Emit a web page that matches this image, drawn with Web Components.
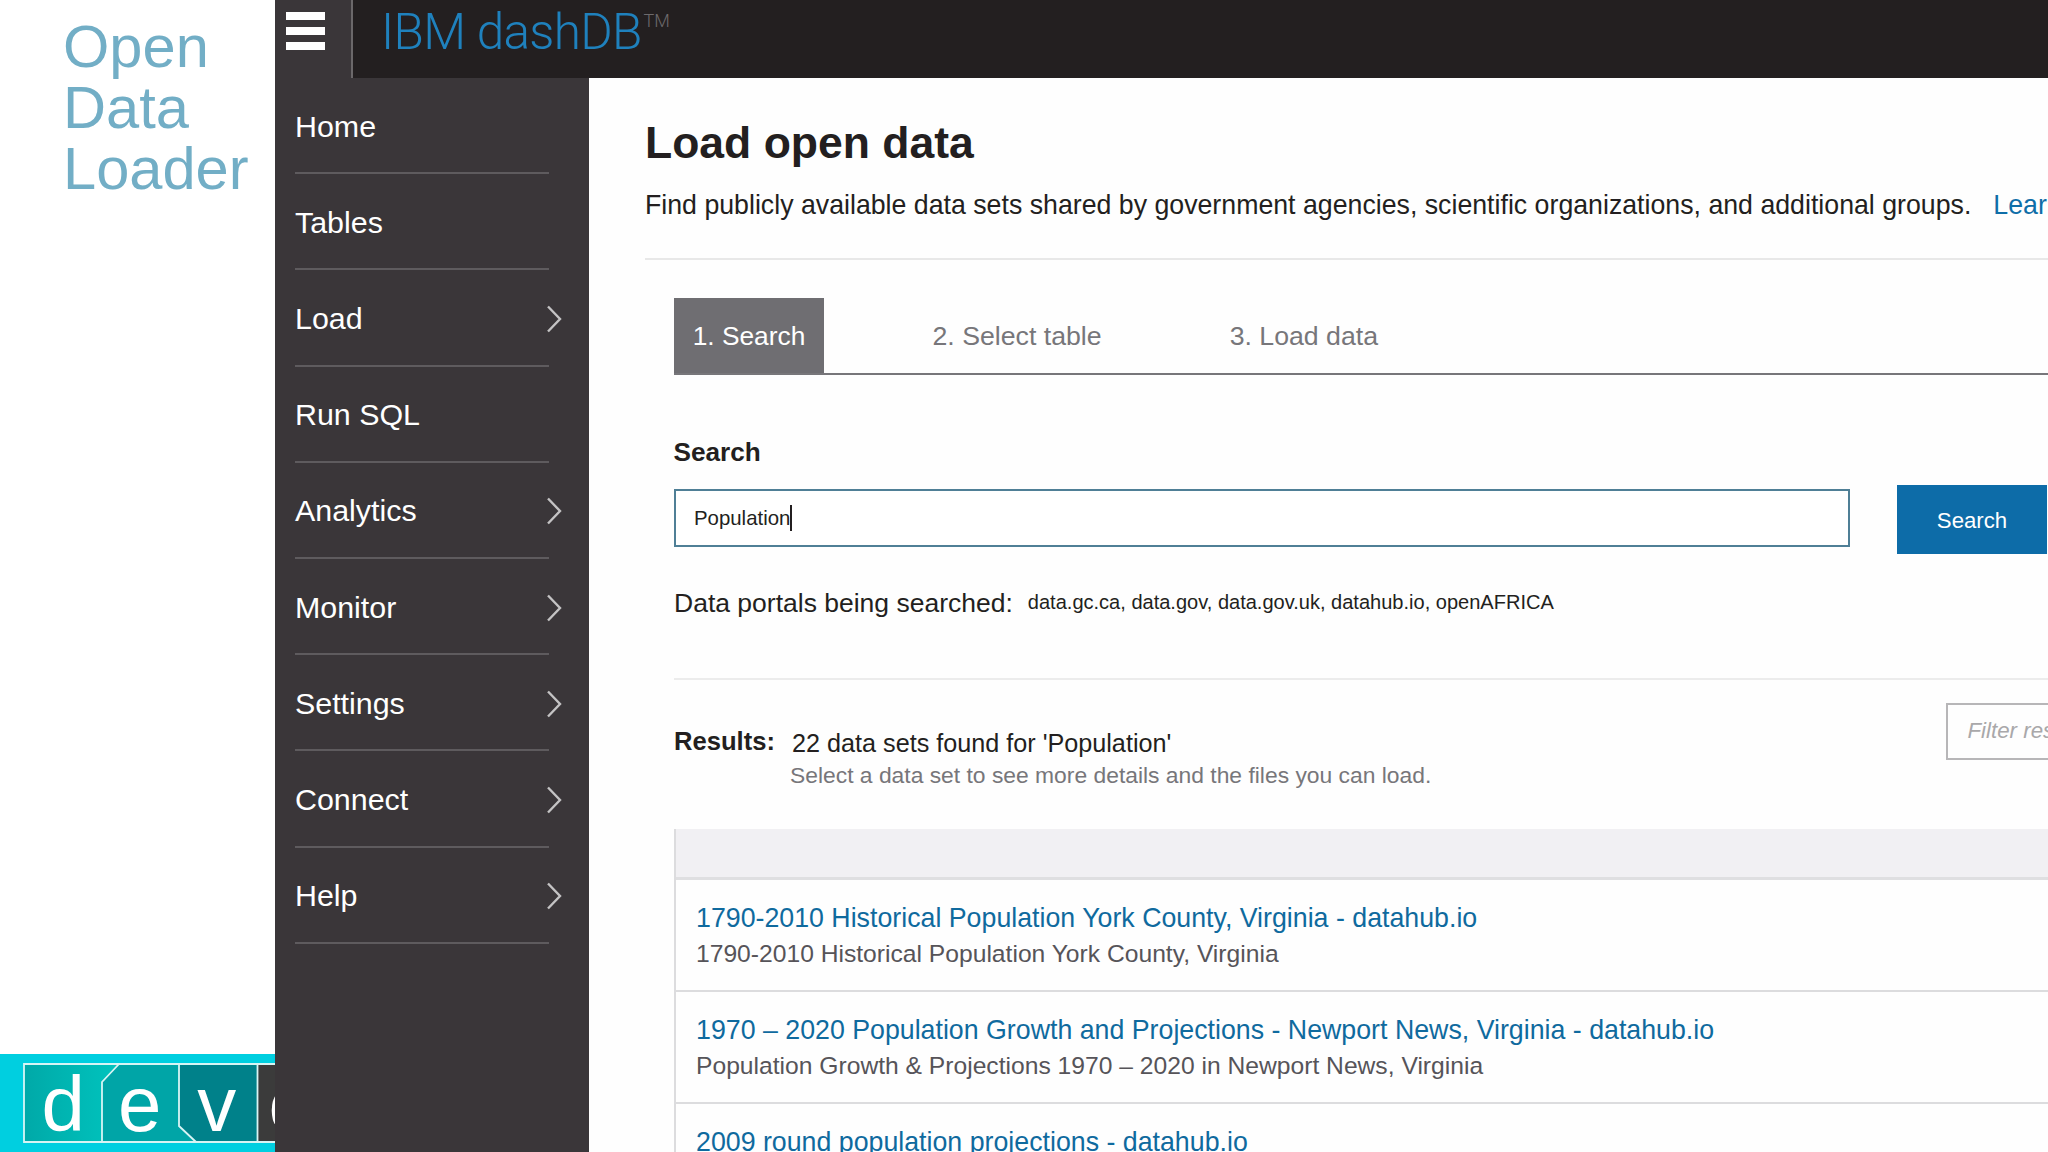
<!DOCTYPE html>
<html lang="en">
<head>
<meta charset="utf-8">
<title>Open Data Loader</title>
<style>
html,body{margin:0;padding:0;width:2048px;height:1152px;overflow:hidden;background:#fff}
body{font-family:"Liberation Sans",Arial,sans-serif}
app-shell{width:2048px;height:1152px}
</style>
</head>
<body>
<app-shell>
  <dev-panel slot="left">
    <span slot="title">Open<br>Data<br>Loader</span>
  </dev-panel>
  <top-bar slot="top"></top-bar>
  <side-nav slot="nav">
    <nav-item>Home</nav-item>
    <nav-item>Tables</nav-item>
    <nav-item arrow>Load</nav-item>
    <nav-item>Run SQL</nav-item>
    <nav-item arrow>Analytics</nav-item>
    <nav-item arrow>Monitor</nav-item>
    <nav-item arrow>Settings</nav-item>
    <nav-item arrow>Connect</nav-item>
    <nav-item arrow>Help</nav-item>
  </side-nav>
  <load-page slot="main">
    <wizard-tabs></wizard-tabs>
    <search-form></search-form>
    <results-head></results-head>
    <results-table>
      <result-row><span slot="title">1790-2010 Historical Population York County, Virginia - datahub.io</span>1790-2010 Historical Population York County, Virginia</result-row>
      <result-row><span slot="title">1970 – 2020 Population Growth and Projections - Newport News, Virginia - datahub.io</span>Population Growth &amp; Projections 1970 – 2020 in Newport News, Virginia</result-row>
      <result-row><span slot="title">2009 round population projections - datahub.io</span></result-row>
    </results-table>
  </load-page>
</app-shell>
<script>
function def(name, html, init){
  customElements.define(name, class extends HTMLElement{
    constructor(){super();const r=this.attachShadow({mode:'open'});r.innerHTML=html;}
    connectedCallback(){ if(init) init(this); }
  });
}
def('app-shell',`<style>
:host{display:grid;grid-template-columns:275px 1fr;grid-template-rows:78px 1fr;overflow:hidden}
.l{grid-row:1/3;display:block;min-height:0}
.t{display:block}
.b{display:flex;min-height:0;overflow:hidden}
</style>
<div class="l"><slot name="left"></slot></div>
<div class="t"><slot name="top"></slot></div>
<div class="b"><slot name="nav"></slot><slot name="main"></slot></div>`);

def('dev-panel',`<style>
:host{display:flex;flex-direction:column;justify-content:space-between;height:1152px;background:#fff}
.title{font:59.600px/61px "Liberation Sans",Arial,sans-serif;color:#72aec6;padding:16px 0 0 63px}
.bar{height:98px;background:#00cfe0;padding:9px 0 0 23px;box-sizing:border-box;overflow:hidden}
.logo{position:relative;width:252px;height:80px;box-sizing:border-box;display:flex;overflow:hidden}
svg{position:absolute;left:0;top:0}
.c{position:relative;width:77.500px;flex:none;text-align:center;color:#fff;font:78px/83px "Liberation Sans",Arial,sans-serif;height:80px}
.c.d{padding-left:3px;box-sizing:border-box}
.c.e{padding-left:1px;box-sizing:border-box}
.c.o{margin-left:-4px}
</style>
<div class="title"><slot name="title"></slot></div>
<div class="bar"><div class="logo">
<svg width="260" height="80" viewBox="0 0 260 80">
<defs><linearGradient id="g" x1="0" x2="1" y1="0" y2="0"><stop offset="0" stop-color="#00a9a8"/><stop offset="1" stop-color="#00c4be"/></linearGradient></defs>
<rect x="1" y="1" width="258" height="78" fill="#3b3b3b"/>
<rect x="1" y="1" width="234" height="78" fill="#00818a"/>
<polygon points="79,19 96,1 156,1 156,63 173,79 79,79" fill="#00a5a7"/>
<polygon points="1,1 96,1 79,19 79,79 1,79" fill="url(#g)"/>
<path d="M234.500 1H1V79H260M79 79V19L96 1M156 1V63L173 79M234.500 1V79M234.500 1H260" fill="none" stroke="#d8f4f4" stroke-width="1.800"/>
</svg>
<div class="c d">d</div><div class="c e">e</div><div class="c">v</div><div class="c o">o</div>
</div></div>`);

def('top-bar',`<style>
:host{display:flex;height:78px;background:#231f20;overflow:hidden}
.m{width:78px;flex:none;box-sizing:border-box;background:#3a3639;border-right:2px solid #6b686a;padding:12px 0 0 11px}
.m i{display:block;width:39px;height:8px;background:#fff;margin-bottom:7px}
.b{padding-left:28px;font:300 49.500px/64px Roboto,"Liberation Sans",sans-serif;color:#1f81bd;letter-spacing:-0.700px;white-space:nowrap}
sup{font-size:18px;color:#6d6a6c;vertical-align:baseline;position:relative;top:-22px;letter-spacing:0;margin-left:2px}
</style>
<div class="m"><i></i><i></i><i></i></div>
<div class="b">IBM dashDB<sup>TM</sup></div>`);

def('side-nav',`<style>
:host{display:block;width:314px;flex:none;background:#3a3639;box-sizing:border-box;padding-left:20px}
</style><slot></slot>`);

def('nav-item',`<style>
:host{display:flex;align-items:center;justify-content:space-between;box-sizing:border-box;width:254px;height:96.200px;border-bottom:2px solid #5e5b5e;color:#fff;font:30.400px/34px "Liberation Sans",Arial,sans-serif;padding-top:1px}
svg{display:none;margin-right:-13px;flex:none;position:relative;top:1px}
:host([arrow]) svg{display:block}
</style><span><slot></slot></span>
<svg width="16" height="28" viewBox="0 0 16 28"><path d="M2 1.500L14 14L2 26.500" fill="none" stroke="#c4c3c4" stroke-width="2.400"/></svg>`);

def('load-page',`<style>
:host{display:block;flex:1;min-width:0;background:#fefefe;padding-left:56px;overflow:hidden;color:#231f20;box-sizing:border-box}
h1{margin:39px 0 0;font:bold 44.500px/52px "Liberation Sans",Arial,sans-serif;color:#231f20;white-space:nowrap}
.d{margin-top:20px;font-size:26.720px;line-height:32px;white-space:nowrap}
.d a{color:#0f6ea8;margin-left:22px}
hr{border:0;height:2px;background:#e8e8e8;margin:37px 0 0}
.w{padding-left:29px}
</style>
<h1>Load open data</h1>
<div class="d">Find publicly available data sets shared by government agencies, scientific organizations, and additional groups.<a>Learn more</a></div>
<hr>
<div class="w"><slot></slot></div>`);

def('wizard-tabs',`<style>
:host{display:flex;margin-top:38px;height:75px;border-bottom:2px solid #77767a;font-size:26.700px;color:#77767a}
div{line-height:76px;white-space:nowrap}
.a{width:150px;text-align:center;background:#6f6e72;color:#fff;font-size:26.300px}
.b{margin-left:108.500px}
.c{margin-left:128px}
</style><div class="a">1. Search</div><div class="b">2. Select table</div><div class="c">3. Load data</div>`);

def('search-form',`<style>
:host{display:block}
.lab{margin-top:62px;font:bold 26.200px/30px "Liberation Sans",Arial,sans-serif;margin-left:-0.500px}
.r{display:flex;margin-top:18px}
.i{margin-top:4px;width:1176px;height:58px;box-sizing:border-box;border:2px solid #4f7f96;background:#fff;font-size:20.400px;line-height:55px;padding-left:18px;flex:none}
.i b{display:inline-block;width:1.500px;height:26px;background:#231f20;vertical-align:-6px}
.s{margin-left:47px;width:150px;height:69px;background:#0d6ca8;color:#fff;font-size:22.200px;line-height:71px;text-align:center;flex:none}
.p{margin-top:34px;display:flex;align-items:center;height:30px;white-space:nowrap;font-size:26.500px}
.p span{font-size:20.050px;margin-left:15px;position:relative;top:-1px}
hr{border:0;height:2px;background:#ececec;margin:60px 0 0}
</style>
<div class="lab">Search</div>
<div class="r"><div class="i">Population<b></b></div><div class="s">Search</div></div>
<div class="p">Data portals being searched:<span>data.gc.ca, data.gov, data.gov.uk, datahub.io, openAFRICA</span></div>
<hr>`);

def('results-head',`<style>
:host{display:flex;height:149px;box-sizing:border-box;padding-top:23px;white-space:nowrap}
.a{width:118px;flex:none;font:bold 25.600px/30px "Liberation Sans",Arial,sans-serif;padding-top:23px;box-sizing:border-box}
.m{width:1154px;flex:none;padding-top:25px;font-size:25.200px;line-height:30px}
.m div{font-size:22.850px;line-height:35px;color:#77767a;margin-left:-2px}
.f{width:300px;height:57px;flex:none;box-sizing:border-box;border:2px solid #b7b6b8;font:italic 22.300px/51px "Liberation Sans",Arial,sans-serif;color:#a9a8aa;padding-left:19.500px}
</style>
<div class="a">Results:</div>
<div class="m">22 data sets found for 'Population'<div>Select a data set to see more details and the files you can load.</div></div>
<div class="f">Filter results</div>`);

def('results-table',`<style>
:host{display:block;border-left:2px solid #dcdcde}
.h{height:48px;background:#f1f0f3;border-bottom:3px solid #dfdfe1;box-sizing:content-box}
</style><div class="h"></div><slot></slot>`);

def('result-row',`<style>
:host{display:block;box-sizing:border-box;height:112.200px;border-bottom:2.500px solid #dcdcde;padding:19.600px 0 0 20px;white-space:nowrap}
.t{font-size:26.750px;line-height:36px;color:#0f6a9e}
.s{font-size:24.650px;line-height:36.500px;color:#565459}
</style><div class="t"><slot name="title"></slot></div><div class="s"><slot></slot></div>`);
</script>
</body>
</html>
